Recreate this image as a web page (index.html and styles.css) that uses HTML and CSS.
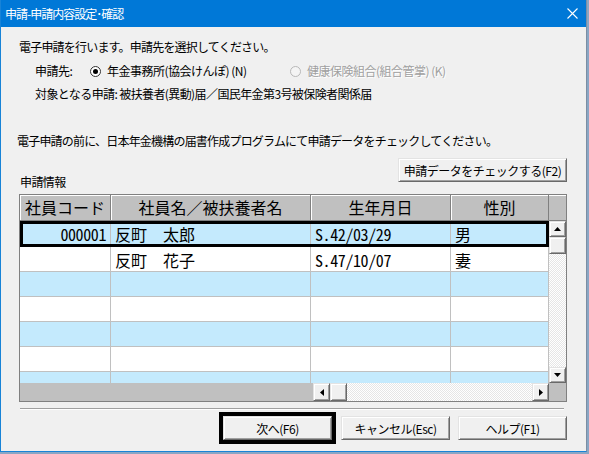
FILE: index.html
```html
<!DOCTYPE html>
<html lang="ja">
<head>
<meta charset="utf-8">
<title>申請-申請内容設定･確認</title>
<link rel="stylesheet" href="styles.css">
</head>
<body>
<div class="window">
  <div class="titlebar">
    <span class="title">申請-申請内容設定･確認</span>
    <svg class="close" width="11" height="11" viewBox="0 0 11 11"><path d="M0.5 0.5 L10.5 10.5 M10.5 0.5 L0.5 10.5" stroke="#fff" stroke-width="1.1" fill="none"/></svg>
  </div>
  <div class="content">
    <p class="line intro">電子申請を行います。申請先を選択してください。</p>
    <div class="line dest">
      <span class="dest-label">申請先:</span>
      <span class="radio first"><span class="dot checked"></span>年金事務所(協会けんぽ) (N)</span>
      <span class="radio disabled"><span class="dot"></span>健康保険組合(組合管掌) (K)</span>
    </div>
    <p class="line target">対象となる申請: 被扶養者(異動)届／国民年金第3号被保険者関係届</p>
    <p class="line notice">電子申請の前に、日本年金機構の届書作成プログラムにて申請データをチェックしてください。</p>

    <div class="info-head">
      <span class="section">申請情報</span>
      <button class="btn check">申請データをチェックする(F2)</button>
    </div>

    <div class="grid">
      <div class="grid-header">
        <div class="hcell c1">社員コード</div>
        <div class="hcell c2">社員名／被扶養者名</div>
        <div class="hcell c3">生年月日</div>
        <div class="hcell c4">性別</div>
        <div class="hfill"></div>
      </div>
      <div class="grid-body">
        <div class="rows">
          <div class="row alt selected">
            <div class="cell c1 num">000001</div>
            <div class="cell c2">反町　太郎</div>
            <div class="cell c3 num">S.42/03/29</div>
            <div class="cell c4">男</div>
          </div>
          <div class="row">
            <div class="cell c1 num"></div>
            <div class="cell c2">反町　花子</div>
            <div class="cell c3 num">S.47/10/07</div>
            <div class="cell c4">妻</div>
          </div>
          <div class="row alt"><div class="cell c1"></div><div class="cell c2"></div><div class="cell c3"></div><div class="cell c4"></div></div>
          <div class="row"><div class="cell c1"></div><div class="cell c2"></div><div class="cell c3"></div><div class="cell c4"></div></div>
          <div class="row alt"><div class="cell c1"></div><div class="cell c2"></div><div class="cell c3"></div><div class="cell c4"></div></div>
          <div class="row"><div class="cell c1"></div><div class="cell c2"></div><div class="cell c3"></div><div class="cell c4"></div></div>
          <div class="row alt"><div class="cell c1"></div><div class="cell c2"></div><div class="cell c3"></div><div class="cell c4"></div></div>
        </div>
        <div class="vscroll">
          <div class="sbtn v"><svg width="7" height="4" viewBox="0 0 7 4"><polygon points="0,4 7,4 3.5,0"/></svg></div>
          <div class="sthumb v"></div>
          <div class="strack"></div>
          <div class="sbtn v"><svg width="7" height="4" viewBox="0 0 7 4"><polygon points="0,0 7,0 3.5,4"/></svg></div>
        </div>
      </div>
      <div class="grid-foot">
        <div class="frozen"></div>
        <div class="hscroll">
          <div class="sbtn h"><svg width="4" height="7" viewBox="0 0 4 7"><polygon points="4,0 4,7 0,3.5"/></svg></div>
          <div class="sthumb h"></div>
          <div class="strack"></div>
          <div class="sbtn h"><svg width="4" height="7" viewBox="0 0 4 7"><polygon points="0,0 0,7 4,3.5"/></svg></div>
        </div>
        <div class="corner"></div>
      </div>
    </div>

    <div class="sep"></div>

    <div class="actions">
      <div class="focus-ring"><button class="btn act">次へ(F6)</button></div>
      <button class="btn act cancel">キャンセル(Esc)</button>
      <button class="btn act help">ヘルプ(F1)</button>
    </div>
  </div>
</div>
</body>
</html>
```

FILE: styles.css
```css
html, body {
  margin: 0;
  padding: 0;
}

body {
  width: 589px;
  height: 454px;
  overflow: hidden;
  background: #8aa6c4;
  font-family: "Noto Sans CJK JP", "Noto Sans", sans-serif;
  color: #000;
}

/* dialog frame */
.window {
  width: 587px;
  height: 452px;
  box-sizing: border-box;
  background: #f0f0f0;
  border: 1px solid #1883d7;
  border-top: 0;
  border-right-color: #7c8ea3;
  display: flex;
  flex-direction: column;
}

.titlebar {
  height: 27px;
  flex: none;
  background: #0078d7;
  color: #fff;
  font-size: 12px;
  letter-spacing: -1px;
  display: flex;
  align-items: center;
  justify-content: space-between;
  padding: 0 8px 0 4px;
}

.close {
  display: block;
}

.content {
  padding-top: 13px;
  font-size: 12px;
}

/* text lines */
.line {
  margin: 0;
  height: 14px;
  line-height: 14px;
  font-size: 12px;
  letter-spacing: -0.8px;
  white-space: nowrap;
}

.intro {
  padding-left: 18px;
}

.dest {
  margin-top: 9px;
  height: 16px;
  display: flex;
  align-items: center;
  padding-left: 34px;
  letter-spacing: -0.5px;
}

.dest-label {
  width: 55px;
}

.radio {
  display: flex;
  align-items: center;
  gap: 6px;
}

.radio.first {
  width: 200px;
}

.radio.disabled {
  color: #a0a0a0;
  text-shadow: 1px 1px 0 #fff;
}

.dot {
  width: 11px;
  height: 11px;
  box-sizing: border-box;
  border-radius: 50%;
  border: 1px solid #333;
  background: #fff;
  display: flex;
  align-items: center;
  justify-content: center;
  flex: none;
}

.dot.checked::after {
  content: "";
  width: 5px;
  height: 5px;
  border-radius: 50%;
  background: #000;
}

.radio.disabled .dot {
  border-color: #b8b8b8;
  background: #f4f4f4;
}

.target {
  margin-top: 8px;
  padding-left: 34px;
  letter-spacing: -0.6px;
}

.notice {
  margin-top: 33px;
  padding-left: 16px;
}

/* section header with check button */
.info-head {
  margin-top: 10px;
  height: 36px;
  display: flex;
  justify-content: space-between;
  padding: 0 19px 0 19px;
}

.section {
  align-self: flex-end;
  line-height: 12px;
  margin-bottom: 6px;
  letter-spacing: -0.6px;
}

/* classic 3D push buttons */
.btn {
  font-family: inherit;
  font-size: 12px;
  letter-spacing: -0.5px;
  color: #000;
  background: #f0f0f0;
  height: 24px;
  padding: 0;
  margin: 0;
  box-sizing: border-box;
  border: 1px solid;
  border-color: #e3e3e3 #696969 #696969 #e3e3e3;
  box-shadow: inset 1px 1px 0 #fff, inset -1px -1px 0 #a0a0a0;
  white-space: nowrap;
}

.check {
  align-self: flex-start;
  width: 169px;
}

/* data grid */
.grid {
  margin-left: 18px;
  width: 548px;
  height: 208px;
  box-sizing: border-box;
  border: 1px solid #808080;
  background: #c0c0c0;
  display: flex;
  flex-direction: column;
}

.grid-header {
  height: 26px;
  display: flex;
  flex: none;
}

.hcell {
  box-sizing: border-box;
  height: 26px;
  line-height: 24px;
  font-size: 16px;
  text-align: center;
  background: #c0c0c0;
  border-right: 1px solid #808080;
  border-bottom: 1px solid #808080;
  box-shadow: inset 1px 1px 0 #fff;
  white-space: nowrap;
  overflow: hidden;
}

.hfill {
  flex: 1;
  background: #c0c0c0;
  border-bottom: 1px solid #808080;
  box-shadow: inset 0 1px 0 #fff;
}

.c1 { width: 91px; }
.c2 { width: 200px; }
.c3 { width: 140px; }
.c4 { width: 98px; }

.grid-body {
  height: 162px;
  display: flex;
  flex: none;
}

.rows {
  width: 529px;
  height: 162px;
  overflow: hidden;
  background: #fff;
}

.row {
  display: flex;
  height: 25px;
  background: #fff;
}

.row.alt {
  background: #c4eafd;
}

.row.selected {
  height: 26px;
  outline: 3px solid #000;
  outline-offset: -3px;
}

.cell {
  box-sizing: border-box;
  height: 100%;
  border-right: 1px solid #c0c0c0;
  border-bottom: 1px solid #c0c0c0;
  font-size: 16px;
  line-height: 24px;
  padding: 1px 0 0 4px;
  white-space: nowrap;
  overflow: hidden;
}

.cell.num {
  font-feature-settings: "hwid" 1;
  letter-spacing: -0.4px;
}

.row .c1 {
  text-align: right;
  padding: 1px 4px 0 0;
}

/* scroll bars */
.vscroll {
  width: 17px;
  display: flex;
  flex-direction: column;
}

.sbtn,
.sthumb {
  box-sizing: border-box;
  background: #f0f0f0;
  border: 1px solid;
  border-color: #e3e3e3 #696969 #696969 #e3e3e3;
  box-shadow: inset 1px 1px 0 #fff, inset -1px -1px 0 #a0a0a0;
  display: flex;
  align-items: center;
  justify-content: center;
  flex: none;
}

.sbtn svg {
  display: block;
  fill: #000;
}

.sbtn.v { width: 17px; height: 16px; }
.sthumb.v { width: 17px; height: 17px; }
.sbtn.h { width: 17px; height: 18px; }
.sthumb.h { width: 17px; height: 18px; }

.strack {
  flex: 1;
  background: repeating-conic-gradient(#ffffff 0 25%, #e6e6e6 0 50%) 0 0 / 2px 2px;
}

.grid-foot {
  height: 18px;
  display: flex;
  flex: none;
}

.frozen {
  width: 293px;
  background: #c0c0c0;
}

.hscroll {
  width: 236px;
  display: flex;
}

.corner {
  flex: 1;
  background: #c0c0c0;
}

/* separator above the action buttons */
.sep {
  margin: 6px 0 0 19px;
  width: 544px;
  height: 0;
  border-top: 1px solid #a0a0a0;
  border-bottom: 1px solid #fff;
}

.actions {
  margin-top: 2px;
  display: flex;
  align-items: center;
  padding-left: 218px;
}

.focus-ring {
  border: 4px solid #000;
  display: flex;
}

.act {
  width: 109px;
}

.cancel {
  margin-left: 5px;
}

.help {
  margin-left: 8px;
}
```
